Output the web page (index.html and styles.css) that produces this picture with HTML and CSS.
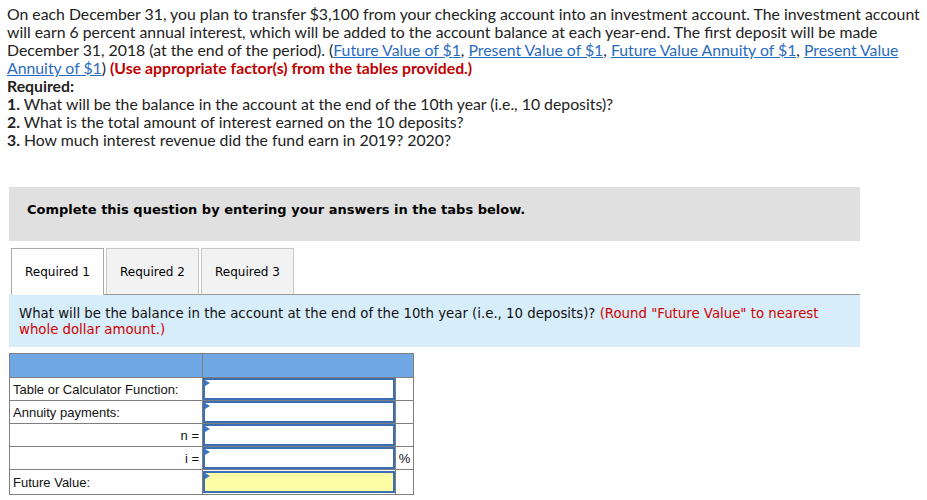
FILE: index.html
```html
<!DOCTYPE html>
<html lang="en">
<head>
  <meta charset="UTF-8">
  <title>Annuity Question</title>
  <link rel="stylesheet" href="styles.css">
</head>
<body>

  <div class="question">
    <p class="intro">
      On each December 31, you plan to transfer $3,100 from your checking account into an investment account. The investment account will earn 6 percent annual interest, which will be added to the account balance at each year-end. The first deposit will be made December 31, 2018 (at the end of the period). (<a href="#">Future Value of $1</a>, <a href="#">Present Value of $1</a>, <a href="#">Future Value Annuity of $1</a>, <a href="#">Present Value Annuity of $1</a>) <strong class="red">(Use appropriate factor(s) from the tables provided.)</strong>
    </p>
    <div class="required"><strong>Required:</strong></div>
    <ol class="req-list">
      <li><strong>1.</strong> What will be the balance in the account at the end of the 10th year (i.e., 10 deposits)?</li>
      <li><strong>2.</strong> What is the total amount of interest earned on the 10 deposits?</li>
      <li><strong>3.</strong> How much interest revenue did the fund earn in 2019? 2020?</li>
    </ol>
  </div>

  <div class="instructions">
    <strong>Complete this question by entering your answers in the tabs below.</strong>
  </div>

  <div class="tabs">
    <div class="tab active">Required 1</div>
    <div class="tab">Required 2</div>
    <div class="tab">Required 3</div>
  </div>

  <div class="prompt">
    What will be the balance in the account at the end of the 10th year (i.e., 10 deposits)? <span class="red">(Round "Future Value" to nearest whole dollar amount.)</span>
  </div>

  <table class="calc">
    <tr class="head">
      <td class="label"></td>
      <td class="field" colspan="2"></td>
    </tr>
    <tr>
      <td class="label">Table or Calculator Function:</td>
      <td class="field"><div class="box"></div></td>
      <td class="unit"></td>
    </tr>
    <tr>
      <td class="label">Annuity payments:</td>
      <td class="field"><div class="box"></div></td>
      <td class="unit"></td>
    </tr>
    <tr>
      <td class="label right">n =</td>
      <td class="field"><div class="box"></div></td>
      <td class="unit"></td>
    </tr>
    <tr>
      <td class="label right">i =</td>
      <td class="field"><div class="box"></div></td>
      <td class="unit">%</td>
    </tr>
    <tr class="last">
      <td class="label">Future Value:</td>
      <td class="field"><div class="box answer"></div></td>
      <td class="unit"></td>
    </tr>
  </table>

</body>
</html>
```

FILE: styles.css
```css
body {
  margin: 5px 7px;
  font-family: Lato, "Open Sans", sans-serif;
  color: #222;
}

.question {
  font-size: 15.8px;
  line-height: 18px;
}

.intro {
  margin: 0;
}

.intro a {
  color: #2a6bc0;
  text-decoration: underline;
}

.red {
  color: #c00000;
}

.required {
  margin: 0;
}

.req-list {
  list-style: none;
  margin: 0;
  padding: 0;
}

.instructions {
  margin: 38px 0 0 2px;
  width: 851px;
  height: 54px;
  box-sizing: border-box;
  padding: 14px 18px;
  background-color: #e0e0e0;
  font-family: "DejaVu Sans", Verdana, sans-serif;
  font-size: 13px;
  line-height: 18px;
  color: #000;
}

.tabs {
  display: flex;
  gap: 2px;
  margin: 7px 0 0 4px;
  width: 849px;
  border-bottom: 1px solid #999;
}

.tab {
  width: 93px;
  height: 46px;
  box-sizing: border-box;
  margin-bottom: -1px;
  border: 1px solid #c8c8c8;
  border-bottom: none;
  background-color: #f2f2f2;
  font-family: "DejaVu Sans", Verdana, sans-serif;
  font-size: 12px;
  color: #000;
  display: flex;
  align-items: center;
  justify-content: center;
}

.tab.active {
  height: 47px;
  background-color: #fff;
  border-color: #aaa;
}

.prompt {
  margin-left: 2px;
  width: 851px;
  height: 52px;
  box-sizing: border-box;
  padding: 11px 10px;
  background-color: #d7edf9;
  font-family: "DejaVu Sans", Verdana, sans-serif;
  font-size: 13.3px;
  line-height: 16px;
  color: #111;
}

.prompt .red {
  color: #d00000;
}

.calc {
  margin: 6px 0 0 2px;
  border-collapse: collapse;
  font-family: "Liberation Sans", Arial, sans-serif;
  font-size: 13px;
  color: #111;
}

.calc td {
  border: 1px solid #7f7f7f;
  padding: 0;
  height: 22px;
}

.calc .head td {
  background-color: #70a8e6;
  height: 23px;
}

.calc .label {
  width: 186px;
  padding: 0 3px;
}

.calc .label.right {
  text-align: right;
}

.calc .field {
  width: 192px;
}

.calc .unit {
  width: 17px;
  text-align: center;
}

.calc .last td {
  height: 24px;
}

.box {
  position: relative;
  height: 22px;
  box-sizing: border-box;
  border: 2px solid #3a6eb5;
  background-color: #fff;
}

.box::before {
  content: "";
  position: absolute;
  left: 0;
  top: 0;
  border-left: 5px solid #3a78c9;
  border-top: 3px solid transparent;
  border-bottom: 3px solid transparent;
}

.box.answer {
  background-color: #fdfda6;
}
```
